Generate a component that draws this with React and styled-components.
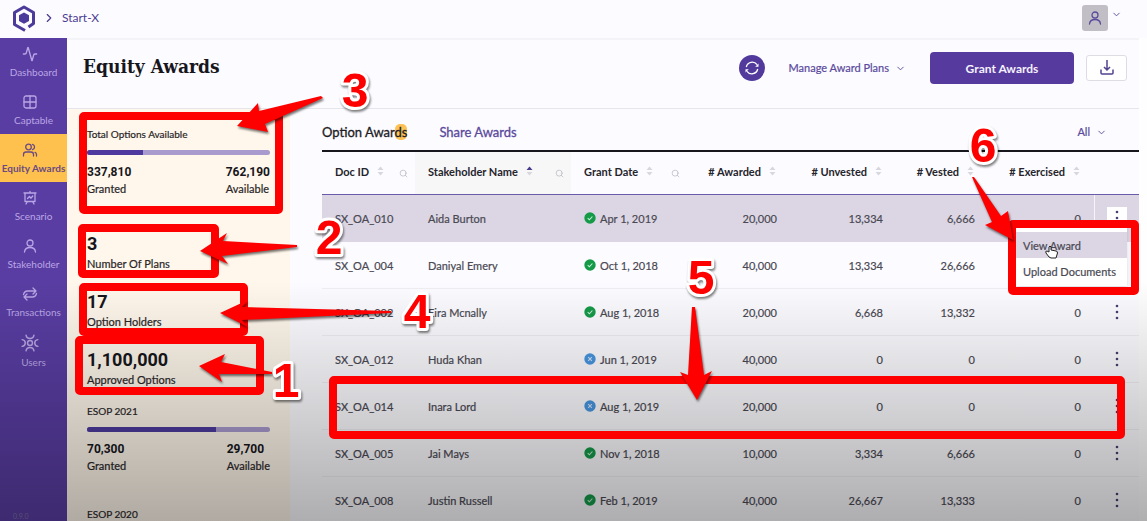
import React from "react";
import styled, { createGlobalStyle, css } from "styled-components";
import {
  Activity,
  ChevronDown,
  ChevronRight,
  Search,
} from "lucide-react";

const GlobalStyle = createGlobalStyle`
  * {
    box-sizing: border-box;
  }

  body {
    margin: 0;
    background: #fefeff;
    color: #2b2a33;
    font-family: Lato, "Liberation Sans", sans-serif;
    font-size: 11px;
  }

  button {
    font-family: inherit;
    cursor: pointer;
  }
`;

// Page frame
const Page = styled.div`
  position: relative;
  display: flex;
  flex-direction: column;
  height: 100vh;
  overflow: hidden;
`;

const TopBar = styled.header`
  flex: none;
  display: flex;
  align-items: center;
  justify-content: space-between;
  height: 38px;
  padding: 0 25px 2px 12px;
  background: #fcfbff;
`;

const Crumbs = styled.nav`
  display: flex;
  align-items: center;
  gap: 6px;
  color: #4c3b92;
`;

const CrumbLink = styled.a`
  color: #4c3b92;
  font-size: 12px;
  line-height: 16px;
  text-decoration: none;
`;

const AccountButton = styled.button`
  display: flex;
  align-items: flex-start;
  gap: 3px;
  padding: 0;
  border: 0;
  background: none;
  color: #5a4a9c;

  > svg {
    margin-top: 4px;
  }
`;

const Avatar = styled.span`
  display: flex;
  align-items: center;
  justify-content: center;
  width: 26px;
  height: 26px;
  border-radius: 3px;
  background: #c1bfc5;
`;

const Body = styled.div`
  flex: 1;
  display: flex;
  min-height: 0;
`;

// Left navigation
const Sidebar = styled.nav`
  flex: none;
  display: flex;
  flex-direction: column;
  width: 67px;
  background: #593da2;
`;

const NavItem = styled.a`
  display: flex;
  flex-direction: column;
  align-items: center;
  gap: 4px;
  height: 48px;
  padding-top: 8px;
  color: ${({ $active }) => ($active ? "#6b4a80" : "#b9a6e6")};
  background: ${({ $active }) => ($active ? "#ffc14d" : "transparent")};
  font-size: 10px;
  line-height: 12px;
  white-space: nowrap;
  text-decoration: none;

  svg {
    flex: none;
    margin-right: 8px;
  }
`;

const NavLabel = styled.span`
  font-weight: ${({ $active }) => ($active ? 700 : 400)};
`;

const Version = styled.span`
  margin-top: auto;
  padding-left: 13px;
  color: #7d6fa6;
  font-size: 7px;
  line-height: 10px;
`;

// Main column
const Main = styled.main`
  flex: 1;
  display: flex;
  flex-direction: column;
  min-width: 0;
  margin-right: 8px;
  background: #fcfbff;
`;

const PageHeader = styled.div`
  flex: none;
  display: flex;
  align-items: flex-start;
  justify-content: space-between;
  height: 71px;
  padding: 12px 12px 0 16px;
  border-top: 2px solid #f4f3f8;
  border-bottom: 1px solid #e6e5ec;
`;

const Title = styled.h1`
  margin: 0;
  color: #17161c;
  font-family: "Roboto Slab", "DejaVu Serif Condensed", "DejaVu Serif", serif;
  font-size: 19px;
  font-weight: 700;
  line-height: 28px;
`;

const Actions = styled.div`
  display: flex;
  align-items: center;
`;

const RefreshButton = styled.button`
  display: flex;
  align-items: center;
  justify-content: center;
  width: 26px;
  height: 26px;
  margin-right: 24px;
  padding: 0;
  border: 0;
  border-radius: 50%;
  background: #513a9c;
`;

const TextButton = styled.button`
  display: flex;
  align-items: center;
  gap: 6px;
  padding: 0;
  border: 0;
  background: none;
  color: #5a4a9c;
  font-size: 11px;
  line-height: 16px;
  -webkit-text-stroke: 0.2px;
`;

const PrimaryButton = styled.button`
  width: 144px;
  height: 32px;
  margin: 0 12px 0 24px;
  border: 0;
  border-radius: 4px;
  background: #563a9d;
  color: #f5f1ff;
  font-size: 12px;
  font-weight: 700;
`;

const DownloadButton = styled.button`
  display: flex;
  align-items: center;
  justify-content: center;
  width: 41px;
  height: 26px;
  padding: 0;
  border: 1px solid #dedde6;
  border-radius: 3px;
  background: #fff;
`;

const Content = styled.div`
  flex: 1;
  display: flex;
  min-height: 0;
`;

// Summary panel
const Summary = styled.aside`
  flex: none;
  width: 223px;
  padding: 19px 20px 0;
  background: #fff7eb;
  color: #2a2628;
  overflow: hidden;
`;

const Pool = styled.section`
  margin-bottom: 34px;
`;

const PoolName = styled.h2`
  margin: 0 0 10px;
  font-size: 10px;
  font-weight: 400;
  line-height: 12px;
  -webkit-text-stroke: 0.2px;
`;

const Track = styled.div`
  height: 5px;
  margin-bottom: 8px;
  border-radius: 3px;
  background: #a99bce;
  overflow: hidden;
`;

const Fill = styled.div`
  height: 100%;
  background: #4e3a9e;
`;

const Split = styled.div`
  display: flex;
  justify-content: space-between;
`;

const Figure = styled.div`
  color: #17161c;
  font-family: "Roboto Slab", Roboto, "Liberation Sans", sans-serif;
  font-size: ${({ $large }) => ($large ? 18 : 12)}px;
  font-weight: 700;
  line-height: ${({ $large }) => ($large ? 25 : 18)}px;
`;

const Caption = styled.div`
  font-size: 11px;
  line-height: 16px;
  -webkit-text-stroke: 0.2px;
`;

const Stat = styled.div`
  margin-bottom: 17px;
`;

// Awards list
const Awards = styled.section`
  flex: 1;
  min-width: 0;
  padding-left: 32px;
`;

const TabBar = styled.div`
  display: flex;
  align-items: center;
  justify-content: space-between;
  height: 43px;
  padding: 5px 32px 0 0;
  border-bottom: 2px solid #17161c;
`;

const Tabs = styled.div`
  display: flex;
  gap: 32px;
`;

const Tab = styled.button`
  padding: 0;
  border: 0;
  background: none;
  color: ${({ $active }) => ($active ? "#1d1c24" : "#5a4a9c")};
  font-size: 13px;
  line-height: 16px;
  -webkit-text-stroke: 0.3px;
`;

const Mark = styled.span`
  border-radius: 5px;
  background: #fdc255;
`;

const Table = styled.table`
  width: 100%;
  border-collapse: separate;
  border-spacing: 0;
  table-layout: fixed;
`;

const Th = styled.th`
  width: ${({ $width }) => ($width ? `${$width}px` : "auto")};
  height: 43px;
  padding: 0 ${({ $number }) => ($number ? 14 : 7)}px 4px 13px;
  border-bottom: 1px solid #6a5aa8;
  background: ${({ $sorted }) => ($sorted ? "#f7f7f8" : "transparent")};
  color: #25242c;
  font-size: 11px;
  font-weight: 700;
  white-space: nowrap;
`;

const HeadInner = styled.div`
  display: flex;
  align-items: center;
  justify-content: ${({ $number }) => ($number ? "flex-end" : "flex-start")};
  gap: 8px;

  .search {
    margin: 4px 0 0 auto;
  }
`;

const Td = styled.td`
  position: relative;
  height: 47px;
  padding: 0 13px;
  border-bottom: 1px solid ${({ $open }) => ($open ? "#dcd6e4" : "#efeef3")};
  background: ${({ $open }) => ($open ? "#dcd6e4" : "transparent")};
  color: #4a4953;
  font-size: 11px;
  text-align: ${({ $number }) => ($number ? "right" : "left")};
  white-space: nowrap;
  -webkit-text-stroke: 0.2px;
`;

const DateCell = styled.span`
  display: flex;
  align-items: center;
  gap: 4px;
`;

const ActionTd = styled(Td)`
  padding: 0;
  text-align: center;
  ${({ $open }) =>
    $open &&
    css`
      border-left: 1px solid #f6f3f9;
    `}
`;

const MoreButton = styled.button`
  display: inline-flex;
  align-items: center;
  justify-content: center;
  width: 20px;
  height: 22px;
  padding: 0;
  border: 0;
  background: ${({ $open }) => ($open ? "#fff" : "transparent")};
  vertical-align: middle;
`;

const Menu = styled.div`
  position: absolute;
  z-index: 1;
  top: 32px;
  right: 12px;
  width: 111px;
  padding: 5px 0 2px;
  background: #fff;
  box-shadow: 0 1px 4px rgba(0, 0, 0, 0.15);
`;

const MenuItem = styled.button`
  display: block;
  width: 100%;
  height: 26px;
  padding: 0 0 0 7px;
  border: 0;
  background: ${({ $hover }) => ($hover ? "#dcd5e3" : "#fff")};
  color: #4a4953;
  font-size: 11px;
  text-align: left;
  white-space: nowrap;
  -webkit-text-stroke: 0.2px;
`;

// Layers over the page
const Shade = styled.div`
  position: absolute;
  inset: 0;
  z-index: 2;
  pointer-events: none;
  background: linear-gradient(
    rgba(0, 0, 0, 0) 54%,
    rgba(0, 0, 0, 0.15) 76%,
    rgba(0, 0, 0, 0.31) 100%
  );
`;

const Annotations = styled.svg`
  position: absolute;
  top: 0;
  left: 0;
  z-index: 3;
  pointer-events: none;

  rect {
    fill: none;
    stroke: #fe0000;
    stroke-width: 8;
  }

  polygon {
    fill: #fe0000;
    filter: drop-shadow(1px 2px 1px rgba(0, 0, 0, 0.55));
  }

  text {
    fill: #fe0000;
    stroke: #fff;
    stroke-width: 6;
    stroke-linejoin: round;
    paint-order: stroke;
    font-family: "Liberation Sans", sans-serif;
    font-size: 48px;
    font-weight: 700;
    text-anchor: middle;
    filter: drop-shadow(1px 2px 1px rgba(0, 0, 0, 0.5));
  }
`;

// Icons
const Logo = () => (
  <svg width="24" height="28" viewBox="0 0 24 28" aria-hidden="true">
    <path
      d="M13 26.500 L2.500 20.500 V8.500 L12 3 L21.500 8.500 V19.500 L16.500 23"
      fill="none"
      stroke="#4d3b9b"
      strokeWidth="3"
      strokeLinejoin="round"
    />
    <path d="M12 8.500 L17 11.300 V17 L12 19.800 L7 17 V11.300 Z" fill="#4d3b9b" />
  </svg>
);

const LineIcon = ({ size = 16, children }) => (
  <svg
    width={size}
    height={size}
    viewBox="0 0 16 16"
    fill="none"
    stroke="currentColor"
    strokeWidth="1.3"
    strokeLinecap="round"
    strokeLinejoin="round"
    aria-hidden="true"
  >
    {children}
  </svg>
);

const GridIcon = () => (
  <LineIcon>
    <rect x="2" y="2" width="12" height="12" rx="2" />
    <path d="M8 2v12M2 8h12" />
  </LineIcon>
);

const PeopleIcon = () => (
  <LineIcon>
    <circle cx="6.500" cy="5" r="2.800" />
    <path d="M1.500 14v-1.500q0-2.500 2.500-2.500h5q2.500 0 2.500 2.500V14M10.500 2.300a2.800 2.800 0 0 1 0 5.400M13 10.300q1.500.5 1.500 2.200V14" />
  </LineIcon>
);

const PersonIcon = ({ size }) => (
  <LineIcon size={size}>
    <circle cx="8" cy="5" r="3" />
    <path d="M2.500 14c.3-3 2-4.500 5.500-4.500s5.200 1.500 5.500 4.500" />
  </LineIcon>
);

const ScenarioIcon = () => (
  <LineIcon>
    <path d="M2 3h12M3 3v8.500h10V3M8 3V1.500M5.500 11.500 4 14M10.500 11.500 12 14M5.500 8.500l2-2 1.300 1.700L10.800 6" />
  </LineIcon>
);

const TransferIcon = () => (
  <LineIcon>
    <path d="M1.500 8.500C2 6.500 3 5 5.500 5H14M11 2l3 3-3 3M14.500 7.500C14 9.500 13 11 10.500 11H2M5 8l-3 3 3 3" />
  </LineIcon>
);

const NetworkIcon = () => (
  <LineIcon size={18}>
    <circle cx="8" cy="8" r="2.200" />
    <path d="M4.500 1c.3 2.200 1.500 3 3.500 3s3.200-.8 3.500-3M4.500 15c.3-2.200 1.500-3 3.500-3s3.200.8 3.500 3M1 5c2.200.3 2.800 1.300 2.800 3S3.200 10.700 1 11M15 5c-2.200.3-2.800 1.300-2.800 3s.6 2.700 2.800 3" />
  </LineIcon>
);

const RefreshIcon = () => (
  <svg width="16" height="16" viewBox="0 0 16 16" fill="none" stroke="#fff" strokeWidth="1.3" aria-hidden="true">
    <path d="M2.300 7A6 6 0 0 1 13 4.700M13.700 9A6 6 0 0 1 3 11.300" />
    <path d="M14.500 3.500v3.300h-3.300zM1.500 12.500V9.200h3.300z" fill="#fff" stroke="none" />
  </svg>
);

const DownloadIcon = () => (
  <svg width="16" height="18" viewBox="0 0 16 18" fill="none" stroke="#51438f" strokeWidth="1.500" aria-hidden="true">
    <path d="M8 1v9.500M5 8l3 3 3-3M2 10.500V14q0 1 1 1h10q1 0 1-1v-3.500" />
  </svg>
);

const Sorter = ({ active }) => (
  <svg width="7" height="10" viewBox="0 0 7 10" aria-hidden="true">
    <path d="M3.500 0.500 6.500 4h-6z" fill={active ? "#4a3a8c" : "#d8d7de"} />
    <path d="M3.500 9.500 6.500 6h-6z" fill="#d8d7de" />
  </svg>
);

const StatusIcon = ({ ok }) => (
  <svg width="12" height="12" viewBox="0 0 12 12" fill="none" role="img" aria-label={ok ? "Accepted" : "Cancelled"}>
    <circle cx="6" cy="6" r="5.700" fill={ok ? "#159a48" : "#4795e0"} />
    <path
      d={ok ? "M3.700 6.200 5.400 7.800 8.400 4.500" : "M4.200 4.200 7.800 7.800M7.800 4.200 4.200 7.800"}
      stroke={ok ? "#c9f0d6" : "#cfe5fa"}
      strokeWidth="1.100"
    />
  </svg>
);

const DotsIcon = () => (
  <svg width="4" height="18" viewBox="0 0 4 18" fill="#45406f" aria-hidden="true">
    <circle cx="2" cy="3" r="1.300" />
    <circle cx="2" cy="9" r="1.300" />
    <circle cx="2" cy="15" r="1.300" />
  </svg>
);

const NAV = [
  { label: "Dashboard", icon: <Activity size={16} strokeWidth={2} /> },
  { label: "Captable", icon: <GridIcon /> },
  { label: "Equity Awards", icon: <PeopleIcon />, active: true },
  { label: "Scenario", icon: <ScenarioIcon /> },
  { label: "Stakeholder", icon: <PersonIcon /> },
  { label: "Transactions", icon: <TransferIcon /> },
  { label: "Users", icon: <NetworkIcon /> },
];

const STATS = [
  { value: "3", label: "Number Of Plans" },
  { value: "17", label: "Option Holders" },
  { value: "1,100,000", label: "Approved Options" },
];

const COLUMNS = [
  { label: "Doc ID", width: 93, search: true },
  { label: "Stakeholder Name", search: true, sorted: true },
  { label: "Grant Date", width: 116, search: true },
  { label: "# Awarded", width: 103, number: true },
  { label: "# Unvested", width: 106, number: true },
  { label: "# Vested", width: 92, number: true },
  { label: "# Exercised", width: 106, number: true },
];

const ROWS = [
  { id: "SX_OA_010", name: "Aida Burton", ok: true, date: "Apr 1, 2019", values: ["20,000", "13,334", "6,666", "0"], open: true },
  { id: "SX_OA_004", name: "Daniyal Emery", ok: true, date: "Oct 1, 2018", values: ["40,000", "13,334", "26,666", "0"] },
  { id: "SX_OA_002", name: "Eira Mcnally", ok: true, date: "Aug 1, 2018", values: ["20,000", "6,668", "13,332", "0"] },
  { id: "SX_OA_012", name: "Huda Khan", ok: false, date: "Jun 1, 2019", values: ["40,000", "0", "0", "0"] },
  { id: "SX_OA_014", name: "Inara Lord", ok: false, date: "Aug 1, 2019", values: ["20,000", "0", "0", "0"] },
  { id: "SX_OA_005", name: "Jai Mays", ok: true, date: "Nov 1, 2018", values: ["10,000", "3,334", "6,666", "0"] },
  { id: "SX_OA_008", name: "Justin Russell", ok: true, date: "Feb 1, 2019", values: ["40,000", "26,667", "13,333", "0"] },
];

const OptionPool = ({ name, granted, available }) => {
  const toNumber = (text) => Number(text.replace(/,/g, ""));
  const share = toNumber(granted) / (toNumber(granted) + toNumber(available));

  return (
    <Pool>
      <PoolName>{name}</PoolName>
      <Track>
        <Fill style={{ width: `${share * 100}%` }} />
      </Track>
      <Split>
        <div>
          <Figure>{granted}</Figure>
          <Caption>Granted</Caption>
        </div>
        <div>
          <Figure>{available}</Figure>
          <Caption>Available</Caption>
        </div>
      </Split>
    </Pool>
  );
};

const AwardsTable = () => (
  <Table>
    <thead>
      <tr>
        {COLUMNS.map((col) => (
          <Th key={col.label} $width={col.width} $number={col.number} $sorted={col.sorted}>
            <HeadInner $number={col.number}>
              {col.label}
              <Sorter active={col.sorted} />
              {col.search && <Search className="search" size={9} color="#b9b8c2" />}
            </HeadInner>
          </Th>
        ))}
        <Th $width={45} aria-label="Actions" />
      </tr>
    </thead>
    <tbody>
      {ROWS.map((row) => (
        <tr key={row.id}>
          <Td $open={row.open}>{row.id}</Td>
          <Td $open={row.open}>{row.name}</Td>
          <Td $open={row.open}>
            <DateCell>
              <StatusIcon ok={row.ok} />
              {row.date}
            </DateCell>
          </Td>
          {row.values.map((value, i) => (
            <Td key={i} $number $open={row.open}>
              {value}
            </Td>
          ))}
          <ActionTd $open={row.open}>
            <MoreButton $open={row.open} aria-label={`Actions for ${row.id}`}>
              <DotsIcon />
            </MoreButton>
            {row.open && (
              <Menu>
                <MenuItem $hover>View Award</MenuItem>
                <MenuItem>Upload Documents</MenuItem>
              </Menu>
            )}
          </ActionTd>
        </tr>
      ))}
    </tbody>
  </Table>
);

// Numbered callouts with their boxes and arrows
const Callouts = () => (
  <Annotations width="1147" height="521" viewBox="0 0 1147 521">
    <path
      d="M1049 257l-3-4q-1-2 1-2l2 1v-5q1-2 2 0v3l5 1q1.500 0 1.500 2l-1.500 5h-5z"
      fill="#fff"
      stroke="#222"
      strokeWidth="1"
    />
    <rect x="83" y="116" width="196" height="94" rx="1" />
    <rect x="82" y="228" width="133" height="46" rx="1" />
    <rect x="83" y="287" width="161" height="45" rx="1" />
    <rect x="79" y="340" width="181" height="51" rx="1" />
    <rect x="333" y="380" width="788" height="55" rx="1" />
    <rect x="1012" y="224" width="123" height="67" rx="1" />
    <polygon points="237,126 258,103 259,111 321,96 323,98 265,124 268,132" />
    <polygon points="200,251 227,233 223,241 297,245 297,247 222,256 228,264" />
    <polygon points="220,313 248,300 242,307 391,311 391,313 242,320 248,327" />
    <polygon points="199,366 225,354 221,362 272,372 272,374 219,374 222,382" />
    <polygon points="692,307 695,307 704,375 712,371 697,400 680,372 688,375" />
    <polygon points="972,177 974,177 1001,216 1008,211 1013,240 985,225 992,222" />
    <text x="355" y="107">3</text>
    <text x="329" y="254">2</text>
    <text x="417" y="328">4</text>
    <text x="286" y="397">1</text>
    <text x="701" y="294">5</text>
    <text x="983" y="162">6</text>
  </Annotations>
);

const App = () => {
  return (
    <Page>
      <GlobalStyle />
      <TopBar>
        <Crumbs aria-label="Breadcrumb">
          <Logo />
          <ChevronRight size={14} strokeWidth={2} />
          <CrumbLink href="#company">Start-X</CrumbLink>
        </Crumbs>
        <AccountButton aria-label="Account">
          <Avatar>
            <PersonIcon size={16} />
          </Avatar>
          <ChevronDown size={11} />
        </AccountButton>
      </TopBar>
      <Body>
        <Sidebar>
          {NAV.map((item) => (
            <NavItem key={item.label} href="#nav" $active={item.active}>
              {item.icon}
              <NavLabel $active={item.active}>{item.label}</NavLabel>
            </NavItem>
          ))}
          <Version>0.9.0</Version>
        </Sidebar>
        <Main>
          <PageHeader>
            <Title>Equity Awards</Title>
            <Actions>
              <RefreshButton aria-label="Refresh">
                <RefreshIcon />
              </RefreshButton>
              <TextButton>
                Manage Award Plans
                <ChevronDown size={11} />
              </TextButton>
              <PrimaryButton>Grant Awards</PrimaryButton>
              <DownloadButton aria-label="Download">
                <DownloadIcon />
              </DownloadButton>
            </Actions>
          </PageHeader>
          <Content>
            <Summary>
              <OptionPool name="Total Options Available" granted="337,810" available="762,190" />
              {STATS.map((stat) => (
                <Stat key={stat.label}>
                  <Figure $large>{stat.value}</Figure>
                  <Caption>{stat.label}</Caption>
                </Stat>
              ))}
              <OptionPool name="ESOP 2021" granted="70,300" available="29,700" />
              <PoolName>ESOP 2020</PoolName>
            </Summary>
            <Awards>
              <TabBar>
                <Tabs>
                  <Tab $active>
                    Option Awar<Mark>ds</Mark>
                  </Tab>
                  <Tab>Share Awards</Tab>
                </Tabs>
                <TextButton>
                  All
                  <ChevronDown size={11} />
                </TextButton>
              </TabBar>
              <AwardsTable />
            </Awards>
          </Content>
        </Main>
      </Body>
      <Shade />
      <Callouts />
    </Page>
  );
};

export default App;
